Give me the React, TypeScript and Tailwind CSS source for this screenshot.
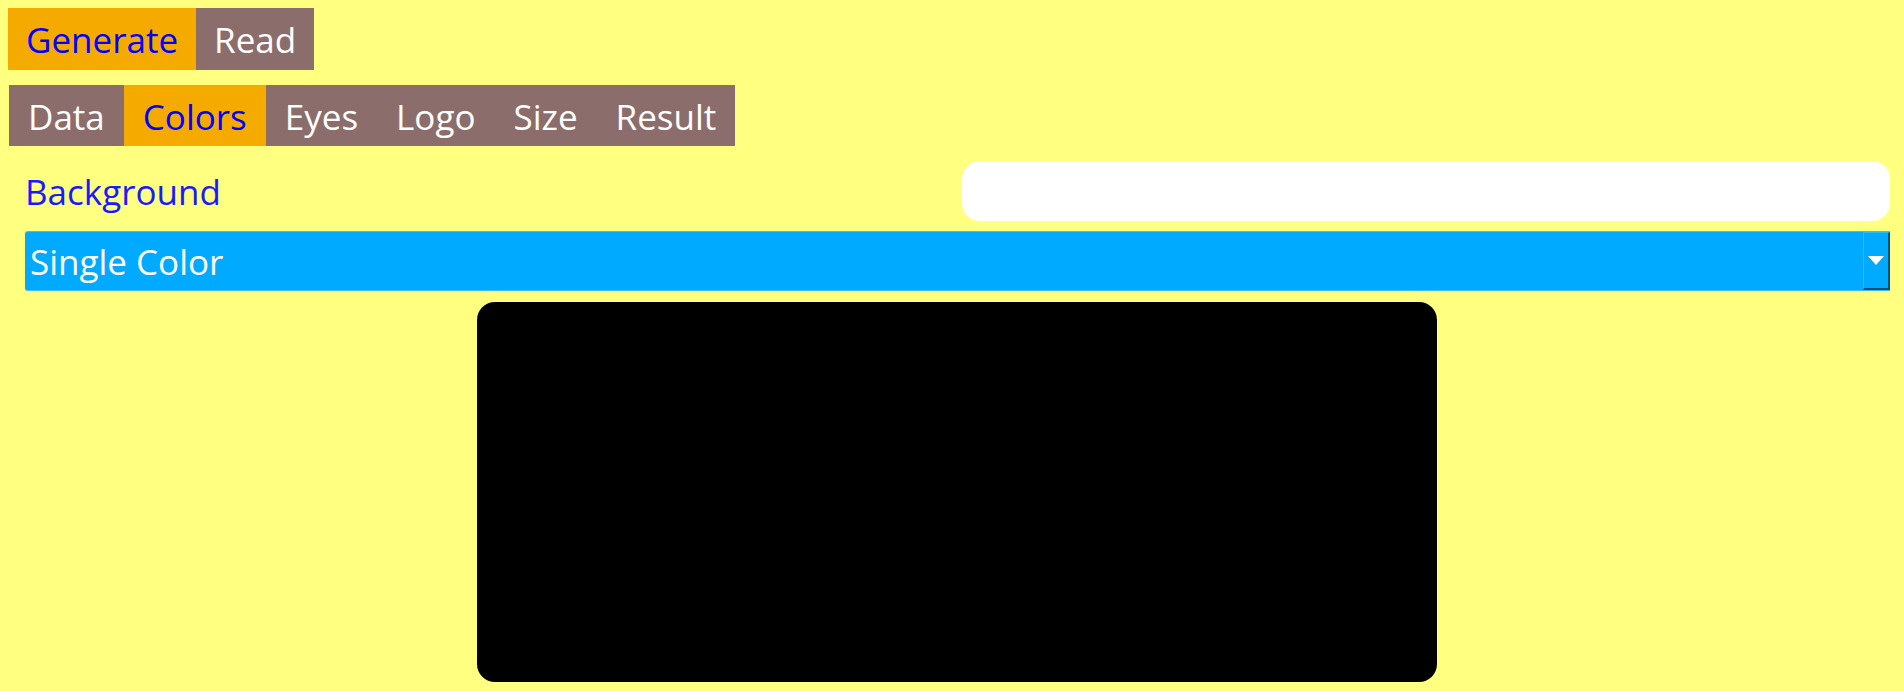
import React, { useState } from "react";

const mainTabs = ["Generate", "Read"];
const subTabs = ["Data", "Colors", "Eyes", "Logo", "Size", "Result"];

const App: React.FC = () => {
  const [mainTab, setMainTab] = useState("Generate");
  const [subTab, setSubTab] = useState("Colors");

  return (
    <div className="min-h-[691px] w-full bg-[#ffff80] p-2 font-['Open_Sans',sans-serif] text-[35px]">
      <div className="flex h-[62px]">
        {mainTabs.map((tab) => (
          <button
            key={tab}
            onClick={() => setMainTab(tab)}
            className={`flex items-center px-[18px] pt-[3px] ${
              tab === mainTab ? "bg-[#f5aa00] text-[#0000ff]" : "bg-[#8b6e6c] text-white"
            }`}
          >
            {tab}
          </button>
        ))}
      </div>

      <div className="mt-[15px] ml-px flex h-[61px]">
        {subTabs.map((tab) => (
          <button
            key={tab}
            onClick={() => setSubTab(tab)}
            className={`flex items-center px-[19px] pt-[3px] ${
              tab === subTab ? "bg-[#f5aa00] text-[#0000ff]" : "bg-[#8b6e6c] text-white"
            }`}
          >
            {tab}
          </button>
        ))}
      </div>

      <div className="ml-[17px] w-[1865px]">
        <div className="mt-[15px] flex h-[60px] items-center justify-between">
          <span className="pt-[3px] text-[#1a1aff]">Background</span>
          <div className="h-[60px] w-[928px] rounded-[18px] bg-white" />
        </div>

        <div className="mt-[10px] flex h-[60px] rounded-l-[3px] border-y border-[#3cc0f0] bg-[#00aaff]">
          <span className="flex flex-1 items-center pl-[5px] pt-[2px] text-white">Single Color</span>
          <div className="flex w-[27px] items-center justify-center border-t border-l border-[#2ab8ff] border-r-2 border-b-2 border-r-[#00507f] border-b-[#00507f]">
            <svg width="16" height="9" viewBox="0 0 16 9">
              <path d="M0 0 H16 L8 9 Z" fill="white" />
            </svg>
          </div>
        </div>

        <div className="mt-[11px] flex justify-center">
          <div className="mr-[2px] h-[380px] w-[960px] rounded-[18px] bg-black" />
        </div>
      </div>
    </div>
  );
};

export default App;
